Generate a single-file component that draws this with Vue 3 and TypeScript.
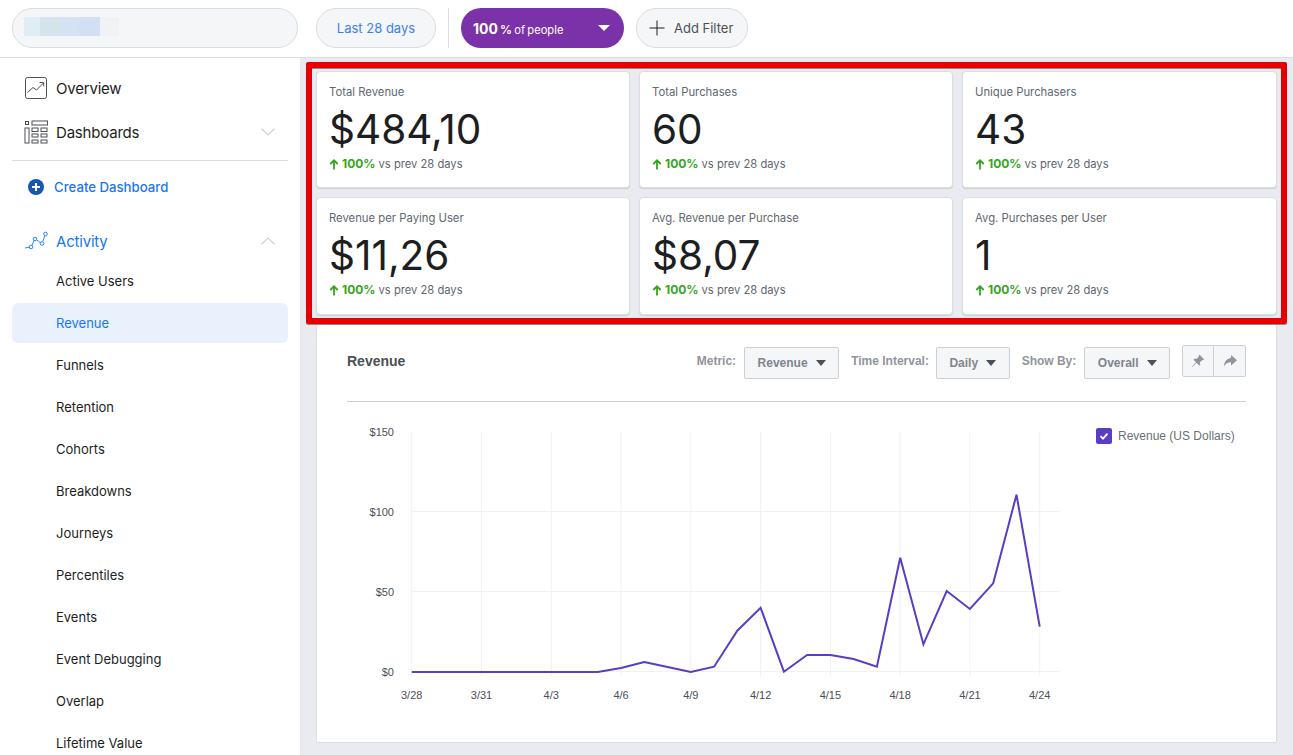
<script setup lang="ts">
interface Stat {
  label: string;
  value: string;
}

const stats: Stat[] = [
  { label: 'Total Revenue', value: '$484,10' },
  { label: 'Total Purchases', value: '60' },
  { label: 'Unique Purchasers', value: '43' },
  { label: 'Revenue per Paying User', value: '$11,26' },
  { label: 'Avg. Revenue per Purchase', value: '$8,07' },
  { label: 'Avg. Purchases per User', value: '1' },
];

const activityItems = [
  'Active Users', 'Revenue', 'Funnels', 'Retention', 'Cohorts', 'Breakdowns',
  'Journeys', 'Percentiles', 'Events', 'Event Debugging', 'Overlap', 'Lifetime Value',
];

const filters = [
  { label: 'Metric:', value: 'Revenue' },
  { label: 'Time Interval:', value: 'Daily' },
  { label: 'Show By:', value: 'Overall' },
];

// Chart scale, in page pixels (the svg viewBox starts at the chart's page position)
const chartLeft = 411.7;
const stepX = 23.26;
const chartRight = 1060;
const yTicks = [
  { label: '$150', y: 432 },
  { label: '$100', y: 511.5 },
  { label: '$50', y: 591.5 },
  { label: '$0', y: 671.5 },
];
const xLabels = ['3/28', '3/31', '4/3', '4/6', '4/9', '4/12', '4/15', '4/18', '4/21', '4/24'];
const xTicks = xLabels.map((label, i) => ({ label, x: chartLeft + i * 3 * stepX }));

const series = [
  672, 672, 672, 672, 672, 672, 672, 672, 672, 668, 662, 667, 672, 666.7,
  630.7, 607.7, 671.7, 655, 655, 659, 666.7, 557.7, 644.3, 591, 609, 583.3, 494.7, 626.7,
];
const linePoints = series.map((y, i) => `${(chartLeft + i * stepX).toFixed(1)},${y}`).join(' ');
</script>

<template>
  <div class="page">
    <header class="topbar">
      <div class="pill app-select">
        <span class="blur-logo">
          <i class="b1"></i><i class="b2"></i><i class="b3"></i><i class="b4"></i><i class="b5"></i>
        </span>
      </div>
      <div class="pill date-pill">Last 28 days</div>
      <div class="divider"></div>
      <div class="people-pill">
        <span><b>100</b> <em>%</em> of people</span>
        <span class="white-caret"></span>
      </div>
      <div class="pill filter-pill">
        <svg width="16" height="16" viewBox="0 0 16 16">
          <path d="M8 0.5v15M0.5 8h15" stroke="#1c1e21" stroke-width="1" fill="none" />
        </svg>
        Add Filter
      </div>
    </header>

    <div class="body">
      <aside class="sidebar">
        <div class="nav-row first">
          <svg class="nav-icon" width="24" height="24" viewBox="0 0 24 24" fill="none" stroke="#4b4f56" stroke-width="1">
            <rect x="1.500" y="1.500" width="21" height="21" rx="2" />
            <path d="M3.500 16.500l5.500-5 3.500 2.500 7-7M15.500 6.500h4.200v3.800" />
          </svg>
          <span>Overview</span>
        </div>
        <div class="nav-row">
          <svg class="nav-icon" width="24" height="24" viewBox="0 0 24 24" fill="none" stroke="#4b4f56" stroke-width="1">
            <rect x="1.500" y="1.500" width="3" height="3" />
            <rect x="1" y="8" width="4" height="15" />
            <rect x="8" y="1" width="15.500" height="4" />
            <rect x="8" y="8" width="6" height="3.500" />
            <rect x="17" y="8" width="6" height="3.500" />
            <rect x="8" y="14" width="6" height="3" />
            <rect x="17" y="14" width="6" height="3" />
            <rect x="8" y="20" width="6" height="3" />
            <rect x="17" y="20" width="6" height="3" />
          </svg>
          <span>Dashboards</span>
          <svg class="chevron" width="14" height="8" viewBox="0 0 14 8" fill="none" stroke="#ccd0d5" stroke-width="1.200">
            <path d="M0.500 0.700L7 7l6.500-6.300" />
          </svg>
        </div>
        <div class="side-sep"></div>
        <div class="create-row">
          <svg width="16" height="16" viewBox="0 0 16 16">
            <circle cx="8" cy="8" r="8" fill="#1458b0" />
            <path d="M8 4v8M4 8h8" stroke="#fff" stroke-width="2" />
          </svg>
          <span>Create Dashboard</span>
        </div>
        <div class="nav-row activity">
          <svg class="nav-icon" width="24" height="20" viewBox="0 0 24 20" fill="none" stroke="#1877f2" stroke-width="0.900">
            <path d="M1 17l4.300-0.800M8 14.300l2-4.600M12.800 9l3.800 2.800M18.800 10.500l2-5.700" />
            <circle cx="7" cy="16" r="1.800" />
            <circle cx="11" cy="8" r="1.800" />
            <circle cx="18" cy="12.500" r="1.800" />
            <circle cx="21.500" cy="3" r="1.800" />
          </svg>
          <span>Activity</span>
          <svg class="chevron" width="14" height="8" viewBox="0 0 14 8" fill="none" stroke="#ccd0d5" stroke-width="1.200">
            <path d="M0.500 7.300L7 1l6.500 6.300" />
          </svg>
        </div>
        <ul class="sub-list">
          <li v-for="item in activityItems" :key="item" :class="{ active: item === 'Revenue' }">{{ item }}</li>
        </ul>
      </aside>

      <main class="content">
        <div class="stat-grid">
          <div v-for="stat in stats" :key="stat.label" class="stat-card">
            <div class="stat-label">{{ stat.label }}</div>
            <div class="stat-value">{{ stat.value }}</div>
            <div class="stat-delta">
              <svg width="10" height="11" viewBox="0 0 10 11" fill="none" stroke="#36a420" stroke-width="1.800">
                <path d="M5 10.500V1.500M1.300 5L5 1.300 8.700 5" />
              </svg>
              <b>100%</b> vs prev 28 days
            </div>
          </div>
        </div>

        <section class="chart-card">
          <div class="chart-head">
            <h2>Revenue</h2>
            <div class="controls">
              <div v-for="f in filters" :key="f.label" class="control">
                <label>{{ f.label }}</label>
                <div class="select">{{ f.value }}<span class="caret"></span></div>
              </div>
              <div class="btn-group">
                <button aria-label="Pin">
                  <svg width="14" height="14" viewBox="0 0 14 14" fill="#90949c">
                    <path d="M8.600 0.800l4.600 4.600-1 .9-.9-.3-2.300 2.200.1 2.200-1 1-2.500-2.600L1.200 13l-.4-.3 4.200-4.500L2.500 5.700l1-1 2.200.1 2.200-2.300-.2-.9z" />
                  </svg>
                </button>
                <button aria-label="Share">
                  <svg width="14" height="14" viewBox="0 0 14 14" fill="#90949c">
                    <path d="M8 1l6 5.200-6 5.300V8.200C4.800 8.200 2.500 9.300 1 12.500c0-4.700 2.700-8 7-8.500z" />
                  </svg>
                </button>
              </div>
            </div>
          </div>

          <div class="chart-body">
            <svg class="chart" width="730" height="290" viewBox="347 420 730 290">
              <g stroke="#f0f1f3" stroke-width="1">
                <line v-for="t in xTicks" :key="t.label" :x1="t.x" :x2="t.x" y1="432" y2="676" />
                <line v-for="t in yTicks.slice(1)" :key="t.label" :x1="chartLeft" :x2="chartRight" :y1="t.y" :y2="t.y" />
              </g>
              <g class="axis-text">
                <text v-for="t in yTicks" :key="t.label" x="394" :y="t.y + 4" text-anchor="end">{{ t.label }}</text>
                <text v-for="t in xTicks" :key="t.label" :x="t.x" y="699" text-anchor="middle">{{ t.label }}</text>
              </g>
              <polyline :points="linePoints" fill="none" stroke="#5b3cc4" stroke-width="2" />
            </svg>
            <div class="legend">
              <span class="check">
                <svg width="10" height="10" viewBox="0 0 10 10" fill="none" stroke="#fff" stroke-width="1.800">
                  <path d="M1.500 5.200l2.500 2.500 4.500-5" />
                </svg>
              </span>
              Revenue (US Dollars)
            </div>
          </div>
        </section>

        <div class="highlight"></div>
      </main>
    </div>
  </div>
</template>

<style>
html, body { margin: 0; }
</style>

<style scoped>
.page {
  width: 1293px;
  height: 755px;
  overflow: hidden;
  display: flex;
  flex-direction: column;
  font-family: Inter, "Liberation Sans", sans-serif;
  color: #1c1e21;
  background: #fff;
}

.topbar {
  height: 58px;
  flex: none;
  box-sizing: border-box;
  display: flex;
  align-items: flex-start;
  padding: 8px 0 0 12px;
  border-bottom: 1px solid #dadde1;
}
.pill {
  height: 40px;
  box-sizing: border-box;
  border: 1px solid #dadde1;
  border-radius: 20px;
  background: #f5f6f7;
  display: flex;
  align-items: center;
  font-size: 13px;
}
.app-select { width: 286px; padding-left: 11px; margin-right: 18px; }
.blur-logo { display: flex; height: 19px; margin-top: -4px; }
.blur-logo i { display: block; height: 100%; width: 19px; }
.b1 { background: #dfeef5; width: 16px !important; }
.b2 { background: #d5e3ea; width: 20px !important; }
.b3 { background: #d5e2f3; }
.b4 { background: #d3dff2; width: 21px !important; }
.b5 { background: #f0f2f5; }
.date-pill {
  width: 120px;
  justify-content: center;
  color: #4080ec;
}
.divider { width: 1px; height: 40px; background: #dadde1; margin: 0 12px; }
.people-pill {
  width: 163px;
  height: 40px;
  border-radius: 20px;
  background: #7b31a8;
  color: #fff;
  font-size: 11.2px;
  word-spacing: -1px;
  display: flex;
  align-items: center;
  justify-content: space-between;
  padding: 0 14px 0 12px;
  box-sizing: border-box;
  margin-right: 12px;
}
.people-pill b { font-size: 14px; font-weight: 700; }
.people-pill em { font-style: normal; font-weight: 600; font-size: 12px; }
.white-caret {
  width: 0;
  height: 0;
  border-left: 6px solid transparent;
  border-right: 6px solid transparent;
  border-top: 6px solid #fff;
}
.filter-pill { width: 112px; padding-left: 12px; gap: 9px; color: #4b4f56; }

.body { flex: 1; display: flex; min-height: 0; }

.sidebar {
  width: 300px;
  flex: none;
  padding: 0 12px;
  box-sizing: border-box;
  background: #fff;
}
.nav-row {
  height: 44px;
  display: flex;
  align-items: center;
  font-size: 15px;
  letter-spacing: -0.2px;
  padding-left: 12px;
  position: relative;
}
.nav-row.first { margin-top: 8px; }
.nav-icon { margin-right: 8px; flex: none; }
.chevron { position: absolute; right: 13px; top: 18px; }
.side-sep { height: 1px; background: #dadde1; margin-top: 6px; }
.create-row {
  height: 52px;
  display: flex;
  align-items: center;
  gap: 10px;
  padding-left: 16px;
  color: #1877f2;
  font-size: 13.2px;
  font-weight: 500;
}
.nav-row.activity { color: #1877f2; margin-top: 6px; }
.sub-list { list-style: none; margin: -2px 0 0; padding: 0; }
.sub-list li {
  height: 40px;
  margin-bottom: 2px;
  padding-left: 44px;
  display: flex;
  align-items: center;
  font-size: 13px;
  border-radius: 6px;
}
.sub-list li.active { background: #e9f1fd; color: #1877f2; }

.content {
  flex: 1;
  position: relative;
  background: #e9ebf0;
  padding: 13px 16px 0;
  box-sizing: border-box;
  overflow: hidden;
}
.stat-grid {
  display: grid;
  grid-template-columns: 314px 314px 315px;
  grid-template-rows: 117px 118px;
  gap: 9px;
}
.stat-card {
  background: #fff;
  border: 1px solid #dadde1;
  border-radius: 4px;
  box-shadow: 0 1px 1px rgba(0, 0, 0, 0.12);
  padding: 12px 12px 0;
  box-sizing: border-box;
}
.stat-label { font-size: 11.3px; line-height: 16px; color: #606770; }
.stat-value { font-size: 40.5px; line-height: 50px; margin-top: 5px; }
.stat-delta { font-size: 11.2px; line-height: 16px; margin-top: 1px; color: #606770; display: flex; align-items: center; gap: 3px; }
.stat-delta b { color: #36a420; font-weight: 700; font-size: 12px; }

.chart-card {
  margin-top: 9px;
  height: 419px;
  box-sizing: border-box;
  background: #fff;
  border: 1px solid #dadde1;
  border-radius: 2px;
  padding: 21px 30px 0;
}
.chart-head {
  display: flex;
  justify-content: space-between;
  height: 55px;
  border-bottom: 1px solid #ccd0d5;
}
.chart-head h2 {
  margin: 7px 0 0;
  font: bold 14px/16px "Liberation Sans", sans-serif;
  color: #4b4f56;
}
.controls { display: flex; align-items: flex-start; font-family: "Liberation Sans", sans-serif; }
.control { display: flex; align-items: flex-start; margin-right: 12px; }
.control label {
  font-size: 12px;
  font-weight: 700;
  line-height: 16px;
  margin-top: 7px;
  margin-right: 8px;
  color: #90949c;
}
.control:nth-child(2) label { margin-right: 7px; }
.select {
  height: 32px;
  margin-top: 1px;
  box-sizing: border-box;
  padding: 0 12.5px;
  display: flex;
  align-items: center;
  gap: 8px;
  background: #f5f6f7;
  border: 1px solid #ccd0d5;
  border-radius: 2px;
  font-size: 12px;
  font-weight: 700;
  color: #7f8591;
}
.caret {
  width: 0;
  height: 0;
  border-left: 5.5px solid transparent;
  border-right: 5.5px solid transparent;
  border-top: 6px solid #4b4f56;
}
.btn-group { display: flex; margin-top: -1px; }
.btn-group button {
  width: 32px;
  height: 32px;
  padding: 0;
  display: flex;
  align-items: center;
  justify-content: center;
  background: #f5f6f7;
  border: 1px solid #ccd0d5;
  border-radius: 2px 0 0 2px;
}
.btn-group button + button { border-left: 0; border-radius: 0 2px 2px 0; }

.chart-body { display: flex; justify-content: space-between; margin-top: 18px; }
.chart { display: block; flex: none; }
.axis-text { font: 11px "Liberation Sans", sans-serif; fill: #4b4f56; }
.legend {
  width: 150px;
  margin-top: 8px;
  height: 16px;
  display: flex;
  align-items: center;
  gap: 6px;
  font: 12px "Liberation Sans", sans-serif;
  color: #6b7078;
  white-space: nowrap;
}
.check {
  width: 16px;
  height: 16px;
  flex: none;
  border-radius: 2px;
  background: #5b3cc4;
  display: flex;
  align-items: center;
  justify-content: center;
}

.highlight {
  position: absolute;
  left: 6px;
  top: 4px;
  width: 981px;
  height: 262px;
  box-sizing: border-box;
  border: 6px solid #e60000;
  border-radius: 2px;
  box-shadow: inset 0 1px 0 #8a8a8a, 0 1px 0 #8a8a8a;
  pointer-events: none;
}
</style>
